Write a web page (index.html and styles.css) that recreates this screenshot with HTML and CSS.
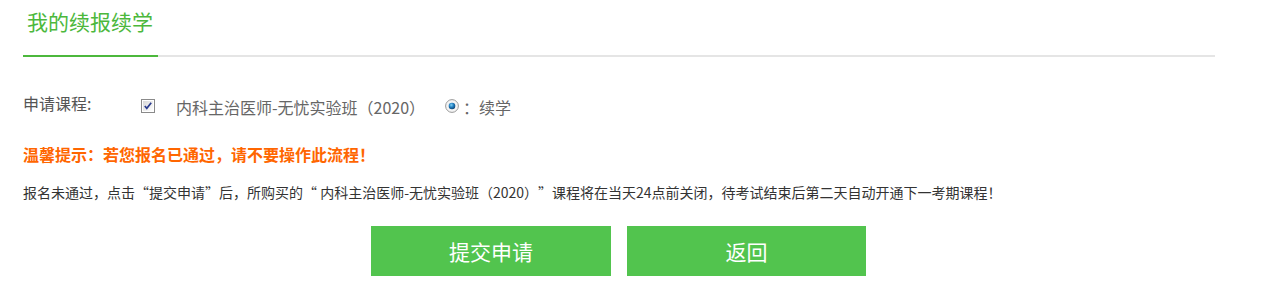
FILE: index.html
```html
<!DOCTYPE html>
<html lang="zh-CN">
<head>
<meta charset="utf-8">
<title>我的续报续学</title>
<link rel="stylesheet" href="styles.css">
</head>
<body>
<div class="page">
  <div class="tabs">
    <div class="tab">我的续报续学</div>
  </div>
  <div class="form-row">
    <span class="label">申请课程:</span>
    <label class="course">
      <svg class="checkbox" width="14" height="14" viewBox="0 0 14 14">
        <defs>
          <linearGradient id="cbg" x1="0" y1="0" x2="1" y2="1">
            <stop offset="0" stop-color="#d8d8d8"/>
            <stop offset="1" stop-color="#ffffff"/>
          </linearGradient>
        </defs>
        <rect x="0.5" y="0.5" width="13" height="13" fill="#ffffff" stroke="#8a8a8a"/>
        <rect x="2" y="2" width="10" height="10" fill="url(#cbg)"/>
        <path d="M3.8 7 L5.8 9.4 L10.2 3.8" fill="none" stroke="#2b3c8e" stroke-width="1.7"/>
      </svg>
      <span class="course-name">内科主治医师-无忧实验班（2020）</span>
    </label>
    <label class="option">
      <svg class="radio" width="14" height="14" viewBox="0 0 14 14">
        <defs>
          <radialGradient id="rdot" cx="0.4" cy="0.35" r="0.7">
            <stop offset="0" stop-color="#7fd0f5"/>
            <stop offset="0.5" stop-color="#1e7bbd"/>
            <stop offset="1" stop-color="#0d3e6b"/>
          </radialGradient>
        </defs>
        <circle cx="7" cy="7" r="6.4" fill="#f4f4f4" stroke="#9a9a9a" stroke-width="1"/>
        <circle cx="7" cy="7" r="3.3" fill="url(#rdot)"/>
      </svg>
      <span class="option-text">：续学</span>
    </label>
  </div>
  <p class="warn">温馨提示：若您报名已通过，请不要操作此流程！</p>
  <p class="desc">报名未通过，点击“提交申请”后，所购买的“ 内科主治医师-无忧实验班（2020）”课程将在当天24点前关闭，待考试结束后第二天自动开通下一考期课程！</p>
  <div class="actions">
    <button class="btn btn-submit" type="button">提交申请</button>
    <button class="btn btn-back" type="button">返回</button>
  </div>
</div>
</body>
</html>
```
FILE: styles.css
```css
html, body {
  margin: 0;
  padding: 0;
  background: #ffffff;
}

body {
  font-family: "Noto Sans CJK SC", "Noto Sans", sans-serif;
  color: #333333;
  text-spacing-trim: space-all;
}

.page {
  margin-left: 23px;
  width: 1192px;
}

.tabs {
  display: flex;
  border-bottom: 2px solid #e5e5e5;
}

.tab {
  width: 131px;
  height: 55px;
  padding-left: 4px;
  margin-bottom: -2px;
  border-bottom: 2px solid #4cb83c;
  color: #4cb83c;
  font-size: 21px;
  line-height: 42px;
  white-space: nowrap;
}

.form-row {
  display: flex;
  align-items: flex-start;
  margin-top: 38px;
  height: 24px;
}

.label {
  width: 118px;
  font-size: 16px;
  line-height: 16px;
  color: #555555;
}

.course,
.option {
  display: flex;
  align-items: flex-start;
}

.checkbox {
  margin-top: 4px;
  flex: none;
}

.course-name {
  margin-left: 21px;
  font-size: 16px;
  line-height: 24px;
  color: #666666;
  white-space: nowrap;
}

.option {
  margin-left: 20px;
}

.radio {
  margin-top: 4px;
  flex: none;
}

.option-text {
  margin-left: 4px;
  font-size: 16px;
  line-height: 24px;
  color: #666666;
}

.warn {
  margin: 23px 0 0;
  font-size: 16px;
  line-height: 24px;
  font-weight: bold;
  color: #ff6600;
}

.desc {
  margin: 16px 0 0;
  font-size: 14px;
  line-height: 20px;
  color: #333333;
  white-space: nowrap;
}

.actions {
  display: flex;
  justify-content: center;
  gap: 16px;
  margin-top: 24px;
  padding-right: 1px;
}

.btn {
  height: 50px;
  border: none;
  padding: 0;
  background: #52c44e;
  color: #ffffff;
  font-family: inherit;
  font-size: 21px;
  cursor: pointer;
}

.btn-submit {
  width: 240px;
}

.btn-back {
  width: 239px;
}
```
